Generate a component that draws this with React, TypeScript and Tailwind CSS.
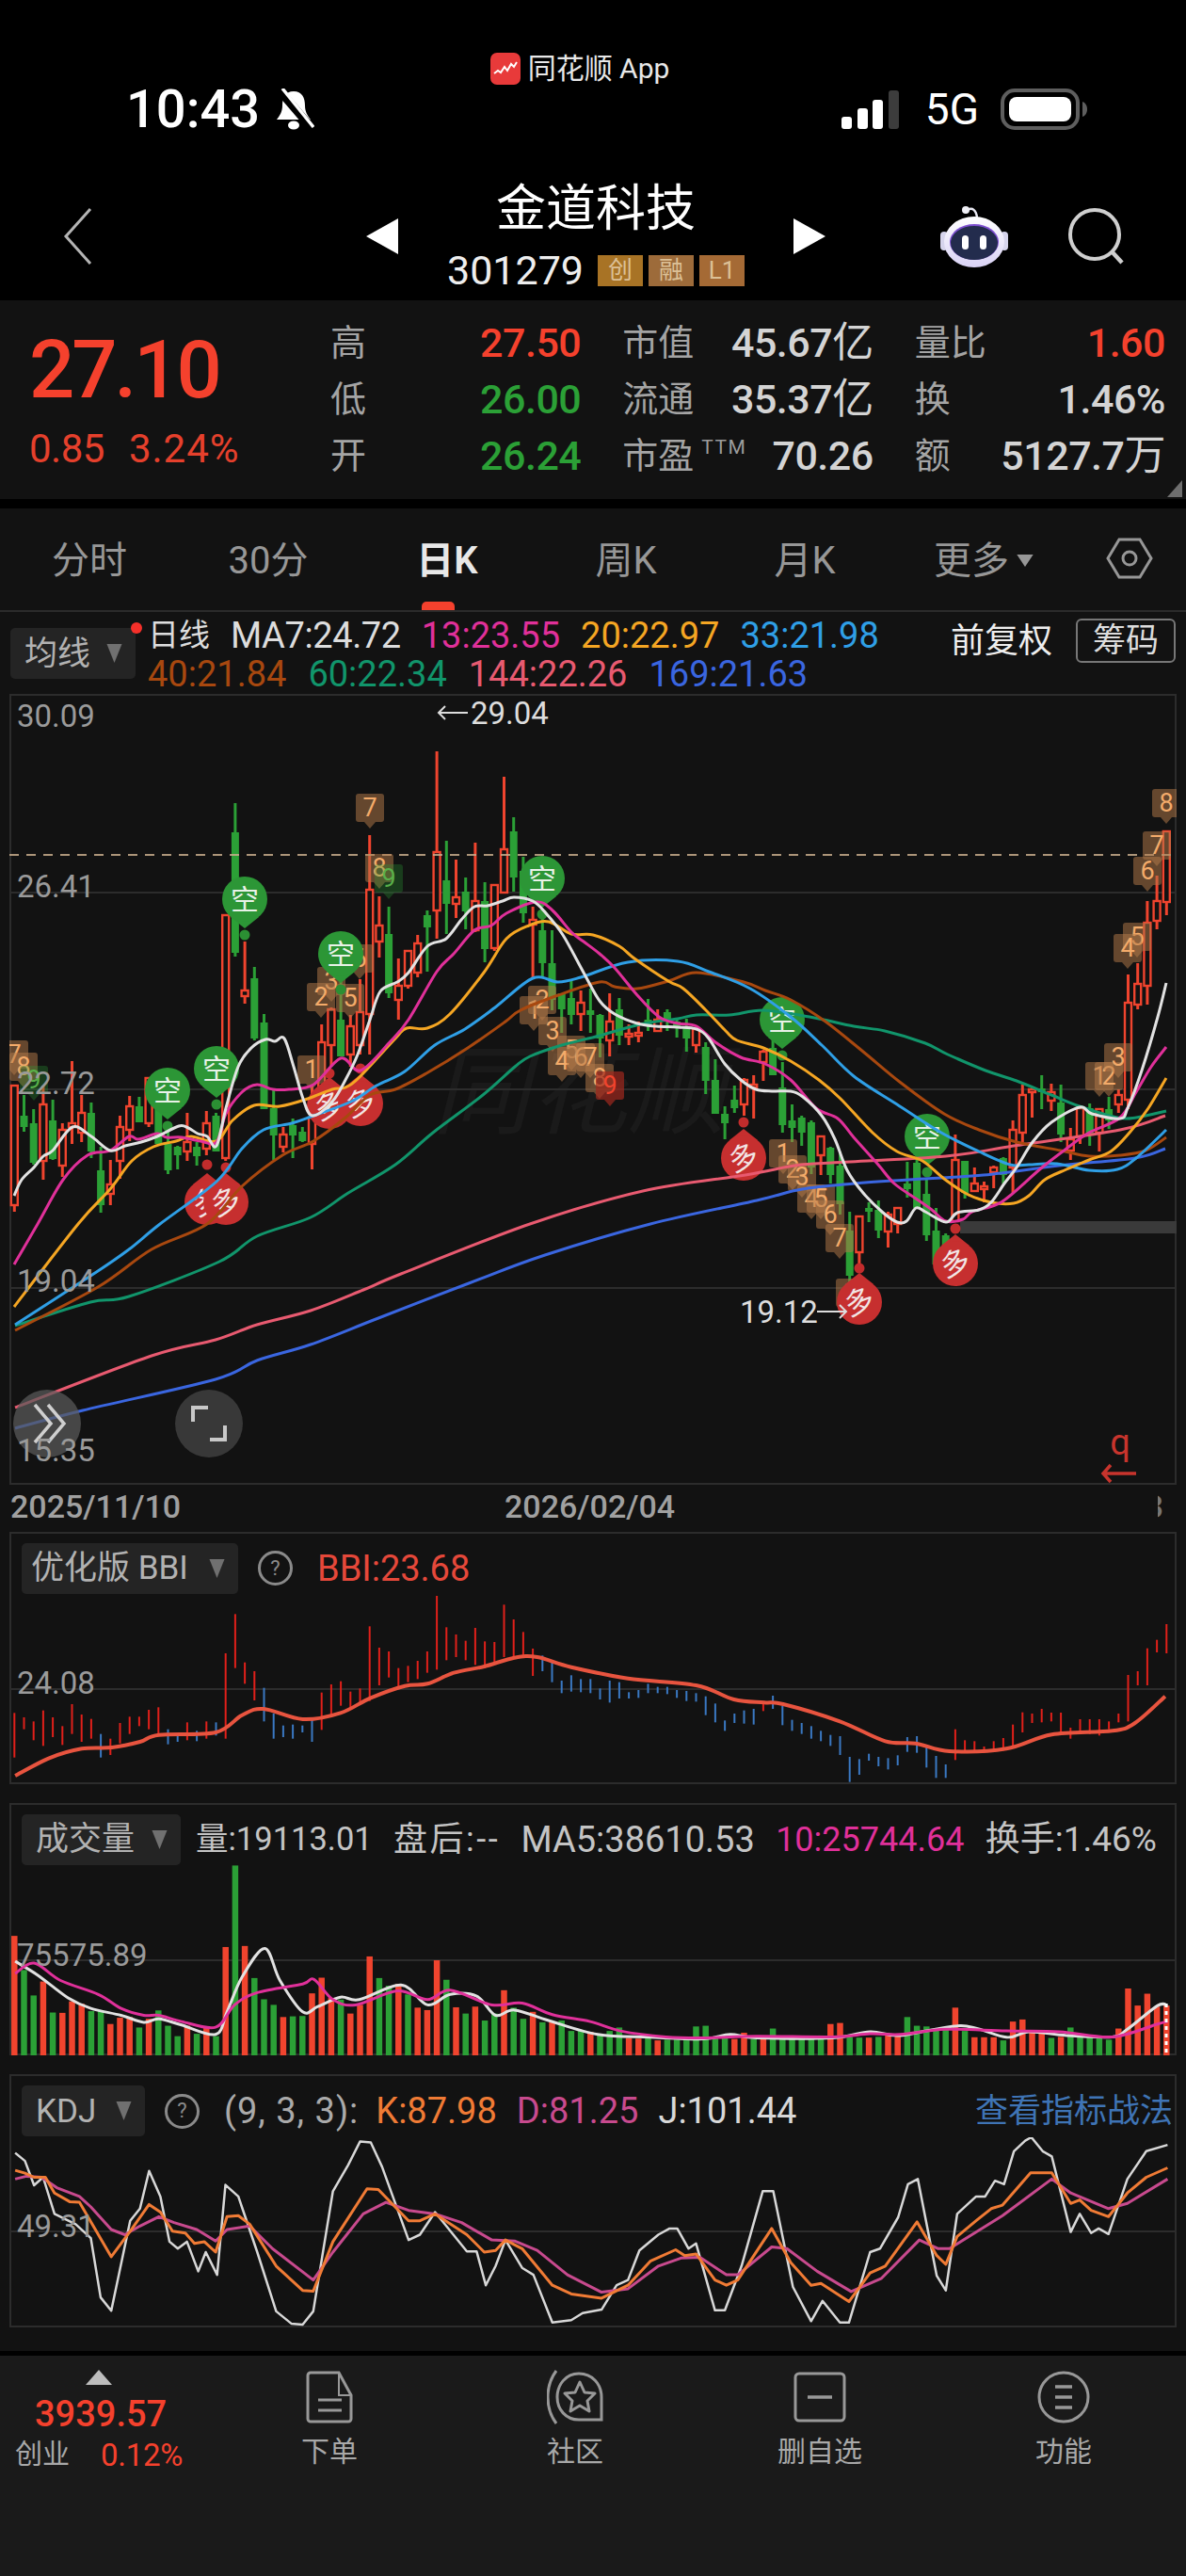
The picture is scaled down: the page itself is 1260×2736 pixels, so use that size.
const RED = '#f0442e';
const GRN = '#2ba036';

// candle: high, body top, body bottom, low, red?
const candles: number[][] = [
  [1153,1153,1280,1287,1],[1163,1185,1197,1202,0],[1178,1193,1235,1237,0],[1153,1173,1233,1253,1],[1168,1190,1231,1232,0],
  [1193,1200,1238,1250,1],[1127,1193,1197,1215,1],[1163,1182,1203,1213,1],[1171,1182,1223,1230,0],[1218,1243,1280,1288,0],
  [1232,1258,1268,1280,1],[1185,1197,1233,1252,1],[1164,1175,1200,1212,1],[1165,1175,1192,1192,0],[1144,1145,1193,1197,1],
  [1137,1150,1215,1215,0],[1193,1215,1243,1247,0],[1217,1218,1227,1242,0],[1182,1213,1223,1233,1],[1213,1218,1228,1238,0],
  [1180,1193,1220,1227,1],[1182,1185,1223,1223,0],[972,972,1230,1233,1],[853,884,1012,1016,0],[1000,1052,1058,1066,1],
  [1027,1039,1103,1105,0],[1077,1086,1178,1178,0],[1158,1177,1206,1232,0],[1197,1205,1218,1224,1],[1188,1195,1206,1230,0],
  [1197,1202,1212,1213,0],[1153,1187,1215,1242,1],[1088,1107,1187,1197,1],[1070,1072,1110,1133,1],[1040,1083,1122,1122,0],
  [1078,1090,1120,1133,1],[1040,1075,1110,1120,1],[887,945,1077,1120,1],[952,983,1000,1017,1],[963,992,1055,1060,0],
  [1018,1047,1062,1083,1],[1010,1010,1047,1050,1],[993,1002,1033,1038,1],[967,972,985,1032,0],[798,905,967,997,1],
  [893,935,960,992,0],[913,953,960,975,1],[932,947,968,987,0],[895,957,988,990,1],[937,957,1008,1022,0],
  [940,940,1007,1010,1],[825,902,948,948,1],[868,883,932,947,0],[910,925,970,980,0],[963,977,982,1038,1],
  [973,988,1023,1038,0],[988,1023,1062,1073,0],[1055,1055,1072,1097,0],[1040,1060,1078,1088,0],[1052,1065,1077,1095,1],
  [1050,1073,1078,1097,0],[1077,1078,1103,1123,0],[1055,1085,1105,1122,1],[1060,1072,1100,1110,0],[1088,1098,1100,1110,1],
  [1085,1097,1098,1107,1],[1061,1083,1090,1095,0],[1072,1083,1095,1095,1],[1072,1075,1083,1095,0],[1083,1085,1090,1102,0],
  [1082,1090,1103,1117,0],[1092,1093,1110,1118,1],[1107,1112,1148,1162,0],[1125,1147,1183,1183,0],[1175,1183,1193,1210,0],
  [1153,1168,1177,1182,0],[1145,1147,1173,1185,1],[1142,1152,1153,1188,1],[1115,1117,1128,1148,1],[1100,1113,1142,1142,0],
  [1128,1155,1195,1203,0],[1173,1190,1198,1213,0],[1185,1187,1203,1217,0],[1190,1192,1240,1247,0],[1207,1207,1227,1248,1],
  [1218,1219,1248,1257,0],[1223,1238,1279,1290,0],[1287,1307,1355,1363,0],[1292,1292,1330,1343,1],[1277,1283,1287,1298,0],
  [1275,1285,1307,1315,0],[1287,1290,1308,1325,1],[1282,1283,1300,1310,1],[1234,1257,1263,1272,0],[1230,1235,1283,1283,0],
  [1253,1268,1312,1318,0],[1283,1307,1343,1350,0],[1310,1312,1328,1350,0],[1205,1232,1297,1297,1],[1233,1233,1267,1273,0],
  [1240,1257,1265,1265,1],[1255,1260,1262,1277,1],[1238,1240,1245,1262,1],[1229,1230,1248,1257,0],[1190,1200,1240,1268,1],
  [1152,1163,1203,1213,1],[1155,1157,1160,1187,1],[1142,1156,1160,1178,0],[1151,1160,1169,1180,1],[1152,1171,1205,1213,0],
  [1198,1210,1222,1232,1],[1175,1177,1207,1215,1],[1172,1177,1205,1217,0],[1177,1178,1203,1223,1],[1165,1178,1190,1199,0],
  [1157,1163,1173,1182,1],[1035,1065,1168,1178,1],[1023,1045,1067,1072,1],[957,980,1047,1067,1],[930,957,978,987,1],
  [882,883,958,972,1],
];

const maLines: { c: string; p: number[] }[] = [
  { c: '#3a66e0', p: [16,1517,88,1498,229,1465,273,1445,330,1428,402,1400,498,1363,579,1333,691,1300,804,1275,852,1263,908,1257,965,1253,1045,1248,1125,1238,1206,1230,1238,1220] },
  { c: '#e85a70', p: [16,1495,161,1440,229,1423,273,1407,330,1392,386,1370,426,1353,563,1300,683,1265,792,1248,844,1238,884,1235,1005,1228,1077,1217,1190,1200,1238,1185] },
  { c: '#11956b', p: [16,1408,96,1383,137,1377,233,1340,273,1313,330,1293,370,1267,420,1237,460,1203,513,1163,547,1133,563,1122,597,1110,637,1100,680,1088,720,1082,740,1078,775,1078,811,1073,860,1080,907,1090,940,1095,983,1108,1007,1120,1047,1137,1080,1148,1117,1163,1147,1175,1187,1187,1207,1187,1239,1180] },
  { c: '#a8480f', p: [16,1413,104,1367,161,1327,220,1300,257,1260,300,1227,333,1212,367,1187,393,1163,420,1157,453,1140,497,1113,537,1085,553,1073,593,1057,637,1043,653,1048,677,1050,710,1042,740,1033,790,1043,813,1052,840,1062,877,1085,917,1117,957,1150,1003,1183,1040,1200,1080,1213,1127,1222,1157,1228,1190,1227,1217,1222,1239,1208] },
  { c: '#2f9fe6', p: [16,1407,104,1350,137,1327,170,1300,230,1255,257,1220,280,1200,310,1193,333,1185,373,1170,400,1153,430,1138,462,1110,494,1093,526,1070,566,1039,593,1043,617,1038,667,1022,720,1021,753,1032,797,1050,840,1080,873,1110,907,1143,953,1173,1000,1203,1040,1223,1073,1237,1093,1237,1123,1236,1157,1243,1187,1242,1207,1230,1239,1200] },
  { c: '#f5a623', p: [15,1388,83,1300,117,1263,140,1233,163,1218,187,1212,203,1207,230,1212,247,1190,270,1174,297,1175,327,1167,353,1157,367,1155,383,1143,420,1103,432,1092,454,1092,478,1077,514,1033,538,997,562,983,583,979,607,992,630,993,658,1005,674,1018,710,1042,726,1050,750,1073,771,1095,783,1105,811,1113,840,1127,870,1147,893,1167,927,1203,953,1223,980,1233,1003,1252,1027,1268,1053,1277,1077,1278,1093,1270,1110,1253,1133,1242,1157,1232,1180,1223,1200,1203,1220,1177,1239,1145] },
  { c: '#e0309a', p: [15,1343,40,1300,67,1253,93,1227,117,1222,137,1207,147,1210,167,1204,177,1208,193,1208,213,1212,230,1213,240,1183,257,1160,273,1152,290,1157,307,1157,333,1152,362,1124,383,1137,414,1107,434,1083,464,1032,482,1013,504,988,522,983,538,970,570,958,587,967,607,990,620,1000,637,1013,653,1028,677,1057,700,1080,720,1087,740,1090,760,1107,787,1123,813,1130,840,1147,867,1177,890,1188,907,1208,933,1237,950,1257,973,1273,990,1285,1005,1297,1023,1295,1033,1287,1057,1280,1073,1270,1107,1240,1133,1220,1157,1203,1190,1187,1207,1160,1223,1133,1239,1112] },
  { c: '#e2e2e2', p: [15,1270,23,1253,36,1240,46,1228,56,1222,77,1197,97,1207,117,1222,133,1217,150,1213,167,1207,190,1196,200,1198,210,1204,220,1207,230,1217,240,1177,253,1133,267,1113,282,1104,292,1106,302,1103,312,1133,322,1167,332,1185,353,1170,367,1147,380,1120,393,1083,404,1053,422,1043,434,1033,454,1005,474,997,490,977,504,963,518,962,534,957,546,953,566,957,580,970,598,993,620,1033,637,1063,653,1077,677,1087,697,1090,720,1091,740,1093,753,1103,770,1130,787,1147,803,1157,820,1159,840,1159,853,1165,873,1185,887,1210,900,1243,917,1267,937,1287,953,1298,963,1297,973,1283,983,1287,1005,1298,1017,1288,1040,1285,1053,1277,1067,1257,1080,1240,1097,1213,1117,1192,1147,1176,1160,1183,1190,1188,1198,1177,1213,1137,1230,1080,1239,1044] },
];

const kongPins = [[260,955],[362,1013],[576,933],[230,1135],[178,1158],[831,1083],[985,1207]];
const duoPins = [[220,1277,1237],[240,1277,1240],[350,1175,1140],[383,1172,1135],[790,1230,1192],[913,1383,1347],[1015,1342,1305]];

const tags: [number, number, string, string?][] = [
  [393,843,'7'],[403,907,'8'],[413,918,'9','g'],[352,1027,'3'],[382,1003,'6'],[341,1044,'2'],[372,1045,'5'],[331,1121,'1'],
  [15,1105,'7'],[25,1118,'8'],[36,1132,'9','g'],
  [567,1058,'1'],[576,1047,'2'],[587,1080,'3'],[607,1100,'5'],[597,1112,'4'],[617,1108,'6'],[627,1108,'7'],[637,1130,'8'],[648,1138,'9','r'],
  [832,1210,'1'],[842,1227,'2'],[852,1235,'3'],[862,1258,'4'],[872,1258,'5'],[882,1275,'6'],[892,1300,'7'],[903,1358,'8'],
  [1168,1128,'1'],[1178,1128,'2'],[1188,1108,'3'],[1208,980,'5'],[1198,992,'4'],[1219,910,'6'],[1229,883,'7'],[1239,838,'8'],
];

// bbi bars, read as top / bottom in a 1.244x / 3x crop
const bbi: number[][] = [
  [598,740],[612,650],[625,685],[590,703],[612,675],[640,700],[570,665],[603,690],[617,680],[665,740],[680,732],[630,695],[610,665],[610,640],[588,650],[580,665],[650,698],[668,690],[628,685],[655,688],[625,680],[628,670],
  [408,680],[283,455],[437,505],[465,558],[518,625],[600,680],[638,675],[635,680],[638,660],[620,690],[533,652],[507,610],[497,575],[530,580],[520,570],[322,560],[390,510],[402,485],[455,518],[448,500],[432,490],[402,470],
  [225,460],[325,430],[348,420],[368,430],[327,445],[370,455],[372,440],[253,420],[300,420],[340,415],[393,480],[415,465],[430,500],[495,535],[478,530],[490,532],[490,535],[520,555],[495,565],[500,552],[532,552],[525,550],
  [505,535],[515,535],[515,538],[525,550],[528,560],[535,562],[545,605],[568,628],[622,655],[600,630],[590,632],[585,635],[565,592],[543,585],[575,637],[620,655],[630,665],[640,680],[655,688],[668,703],[672,732],[738,818],
  [745,795],[728,750],[738,768],[742,778],[733,765],[675,722],[672,725],[705,772],[735,805],[762,805],[650,748],[685,725],[688,720],[705,725],[688,720],[678,718],[635,710],[596,660],[600,630],[585,628],[597,625],[597,665],
  [645,680],[618,660],[618,665],[618,670],[625,650],[600,628],[477,625],[465,510],[392,510],[365,405],[315,408],
];
const bbiBlue = new Set([9,16,17,19,21,26,27,28,29,30,31,55,56,57,58,59,60,61,62,63,64,65,66,67,68,69,70,71,72,73,74,75,76,77,79,80,81,82,83,84,85,86,87,88,89,90,91,92,93,94,95,96,97]);
const bbiLine = [20,798,65,742,108,712,148,708,185,690,210,668,285,660,320,605,348,585,400,618,450,598,490,550,535,512,565,505,600,470,640,450,680,422,710,420,755,452,830,488,920,510,970,555,1010,565,1035,570,1110,625,1170,688,1210,695,1255,720,1330,712,1390,667,1470,655,1500,630,1540,545];

// volume bars: top in crop px, red?
const vol: number[][] = [
  [422,1],[520,0],[593,0],[553,1],[642,0],[643,1],[610,1],[617,1],[638,0],[638,0],[675,1],[657,1],[655,1],[685,0],[660,1],[636,0],[680,0],[710,0],[680,1],[703,0],[685,1],[710,0],
  [454,1],[220,0],[451,1],[543,0],[604,0],[620,0],[655,1],[653,0],[652,0],[587,1],[542,1],[600,1],[605,0],[645,1],[620,1],[481,1],[543,0],[565,0],[560,1],[590,0],[628,1],[635,1],
  [492,1],[548,0],[627,1],[645,0],[625,1],[665,0],[645,0],[578,1],[628,0],[660,0],[640,1],[670,0],[670,1],[665,0],[695,0],[695,0],[698,1],[708,0],[695,0],[685,0],[715,1],[717,1],
  [708,0],[722,1],[720,0],[720,0],[722,0],[682,0],[680,0],[715,0],[715,0],[718,1],[700,1],[718,0],[710,1],[688,0],[710,0],[710,0],[712,0],[718,0],[708,0],[675,1],[672,1],[712,0],
  [714,0],[714,1],[712,0],[705,1],[705,1],[655,0],[680,0],[682,0],[690,0],[690,0],[628,1],[695,0],[713,1],[713,1],[713,1],[722,0],[668,1],[662,1],[700,1],[700,1],[715,0],[712,1],
  [685,0],[712,0],[712,0],[715,0],[720,0],[688,1],[573,1],[622,1],[588,1],[625,1],[622,1],
];
const volWhite = [20,495,50,535,90,600,120,630,160,650,190,670,210,660,240,678,285,705,300,640,320,540,350,458,370,550,400,640,420,625,450,598,475,605,530,563,565,620,595,590,630,595,655,650,680,635,725,665,790,705,860,713,930,718,965,705,1000,715,1100,715,1150,697,1190,708,1270,680,1330,713,1360,697,1410,708,1470,712,1490,690,1530,622,1543,622];
const volPink = [20,530,45,500,80,550,130,590,160,630,190,650,210,650,240,668,285,684,310,620,340,585,400,560,415,547,440,605,470,620,525,580,565,605,595,578,650,620,690,615,730,648,780,668,820,695,880,712,930,715,1000,710,1100,712,1150,703,1190,705,1250,690,1330,695,1400,697,1470,712,1530,675,1543,668];

const kdjJ = [20,1045,33,1068,45,1138,57,1115,72,1220,100,1250,120,1290,133,1460,147,1498,172,1240,185,1205,197,1097,212,1170,224,1300,235,1320,247,1300,262,1385,272,1330,287,1395,298,1137,315,1170,340,1330,365,1500,385,1535,400,1538,414,1500,440,1155,460,1080,476,1012,490,1015,505,1085,540,1295,555,1280,575,1215,617,1328,630,1328,642,1425,655,1370,668,1295,690,1375,705,1395,730,1532,755,1525,770,1505,795,1495,815,1425,830,1410,845,1325,870,1280,885,1262,895,1262,910,1320,920,1305,945,1497,958,1497,980,1370,1008,1155,1022,1155,1048,1430,1072,1528,1087,1470,1110,1532,1122,1532,1150,1330,1163,1320,1187,1230,1200,1135,1213,1120,1238,1398,1250,1440,1265,1220,1290,1170,1302,1170,1315,1125,1327,1135,1340,1040,1355,1010,1363,1000,1378,1040,1390,1055,1415,1272,1427,1220,1442,1275,1452,1262,1465,1278,1490,1120,1515,1040,1543,1022];
const kdjK = [20,1095,33,1103,45,1115,60,1115,72,1160,92,1185,105,1187,147,1343,172,1270,197,1193,212,1215,228,1270,245,1275,257,1305,270,1300,285,1330,300,1228,315,1225,330,1250,365,1370,400,1440,414,1442,440,1300,485,1148,500,1150,540,1240,555,1240,575,1220,617,1280,640,1330,655,1325,668,1295,690,1320,730,1425,755,1450,795,1462,830,1425,860,1355,893,1323,905,1340,920,1335,945,1410,960,1425,975,1410,1020,1262,1045,1360,1072,1425,1085,1420,1122,1472,1150,1390,1170,1370,1212,1243,1238,1340,1250,1365,1265,1285,1290,1240,1310,1205,1325,1195,1362,1102,1390,1102,1415,1190,1427,1180,1442,1210,1465,1228,1490,1160,1515,1115,1543,1088];
const kdjD = [20,1120,35,1112,55,1115,75,1145,105,1170,120,1200,147,1265,165,1280,185,1255,210,1228,230,1245,260,1265,285,1298,300,1265,330,1255,360,1320,414,1410,440,1330,480,1220,510,1187,540,1210,575,1220,610,1245,650,1295,680,1298,710,1325,750,1395,795,1445,830,1435,870,1370,900,1347,925,1345,960,1395,975,1395,1020,1315,1040,1320,1080,1385,1125,1443,1165,1405,1215,1295,1240,1320,1255,1320,1325,1225,1390,1120,1415,1160,1465,1205,1490,1190,1543,1120];

const xAt = (i: number) => 15.3 + 10.2 * i;

const toPoints = (p: number[], sx = 1, sy = 1, oy = 0) => {
  const out: string[] = [];
  for (let i = 0; i < p.length; i += 2) out.push(`${(p[i] / sx).toFixed(1)},${(oy + p[i + 1] / sy).toFixed(1)}`);
  return out.join(' ');
};

// catmull-rom through the read-off points, the averages are smooth in the picture
const toCurve = (p: number[], sx = 1, sy = 1, oy = 0) => {
  const xs: number[] = [];
  const ys: number[] = [];
  for (let i = 0; i < p.length; i += 2) {
    xs.push(p[i] / sx);
    ys.push(oy + p[i + 1] / sy);
  }
  let d = `M${xs[0].toFixed(1)} ${ys[0].toFixed(1)}`;
  for (let i = 0; i < xs.length - 1; i++) {
    const a = Math.max(i - 1, 0);
    const b = Math.min(i + 2, xs.length - 1);
    const c1x = xs[i] + (xs[i + 1] - xs[a]) / 6;
    const c1y = ys[i] + (ys[i + 1] - ys[a]) / 6;
    const c2x = xs[i + 1] - (xs[b] - xs[i]) / 6;
    const c2y = ys[i + 1] - (ys[b] - ys[i]) / 6;
    d += `C${c1x.toFixed(1)} ${c1y.toFixed(1)} ${c2x.toFixed(1)} ${c2y.toFixed(1)} ${xs[i + 1].toFixed(1)} ${ys[i + 1].toFixed(1)}`;
  }
  return d;
};

const Caret = ({ className = '' }: { className?: string }) => (
  <svg viewBox="0 0 16 20" className={`w-[17px] h-[20px] ${className}`}>
    <path d="M0 0H16L8 20Z" fill="#707070" />
  </svg>
);

const HelpDot = () => (
  <span className="flex items-center justify-center w-[37px] h-[37px] rounded-full border-[3px] border-[#8a8a8a] text-[22px] text-[#8a8a8a] leading-none">?</span>
);

const Dropdown = ({ label, w, pad = 'pl-[15px]' }: { label: string; w: string; pad?: string }) => (
  <div className={`flex items-center justify-between h-[54px] rounded-[5px] bg-[#242424] pr-[14px] ${pad} ${w}`}>
    <span className="text-[35px] leading-none text-[#b2b2b2] whitespace-nowrap">{label}</span>
    <Caret />
  </div>
);

const QuoteCell = ({ label, value, color = 'text-[#d4d4d4]', unit, ttm }: { label: string; value: string; color?: string; unit?: string; ttm?: boolean }) => (
  <div className="flex items-center justify-between h-[60px]">
    <span className="flex items-start text-[38px] leading-none text-[#a4a4a4]">
      {label}
      {ttm && <span className="ml-[8px] text-[21px] text-[#9c9c9c] tracking-[1.5px]">TTM</span>}
    </span>
    <span className={`text-[43px] leading-none font-medium tracking-[-0.5px] ${color}`}>
      {value}
      {unit && <span className="text-[44px] font-normal">{unit}</span>}
    </span>
  </div>
);

const StatusBar = () => (
  <div className="flex items-center justify-between h-[52px] pl-[134px] pr-[105px]">
    <div className="flex items-center gap-[14px]">
      <span className="text-[56px] leading-none font-medium text-white">10:43</span>
      <svg viewBox="0 0 44 44" className="w-[44px] h-[44px]">
        <path d="M22 3C13 3 10 10 10 18c0 7-3 11-6 15h36c-3-4-6-8-6-15 0-8-3-15-12-15z" fill="#fff" />
        <ellipse cx="22" cy="39" rx="6" ry="4.5" fill="#fff" />
        <path d="M6 1l36 42" stroke="#000" strokeWidth="9" />
        <path d="M10 0l33 41" stroke="#fff" strokeWidth="3.5" />
      </svg>
    </div>
    <div className="flex items-center">
      <div className="flex items-end gap-[5.5px] h-[41px]">
        <span className="w-[11px] h-[13px] rounded-[3px] bg-white" />
        <span className="w-[11px] h-[22px] rounded-[3px] bg-white" />
        <span className="w-[11px] h-[31px] rounded-[3px] bg-white" />
        <span className="w-[11px] h-[41px] rounded-[3px] bg-[#3c3c3c]" />
      </div>
      <span className="ml-[28px] text-[46px] leading-none text-white">5G</span>
      <svg viewBox="0 0 92 44" className="ml-[23px] w-[92px] h-[44px]">
        <rect x="2" y="2" width="80" height="40" rx="13" fill="none" stroke="#5e5e5e" strokeWidth="4" />
        <rect x="9" y="9" width="66" height="26" rx="8" fill="#fff" />
        <path d="M87 14c3 1 5 4 5 8s-2 7-5 8z" fill="#5e5e5e" />
      </svg>
    </div>
  </div>
);

const Robot = () => (
  <svg viewBox="0 0 72 66" className="w-[72px] h-[66px]">
    <defs>
      <linearGradient id="shell" x1="0" y1="0" x2="0" y2="1">
        <stop offset="0" stopColor="#ffffff" />
        <stop offset="1" stopColor="#d9d2f5" />
      </linearGradient>
    </defs>
    <path d="M29 5c5-3 9 0 10 8" fill="none" stroke="#e8e8f2" strokeWidth="2.5" />
    <circle cx="27" cy="5" r="4" fill="#f0f0f6" />
    <rect x="0" y="28" width="8" height="20" rx="4" fill="#d6d4ec" />
    <rect x="64" y="28" width="8" height="20" rx="4" fill="#d6d4ec" />
    <ellipse cx="36" cy="39" rx="32" ry="27" fill="url(#shell)" />
    <ellipse cx="36" cy="39" rx="26" ry="19" fill="#7d4fd0" />
    <ellipse cx="36" cy="40" rx="25" ry="18" fill="#232c4d" />
    <rect x="23" y="32" width="7" height="15" rx="3.5" fill="#fff" />
    <rect x="42" y="32" width="7" height="15" rx="3.5" fill="#fff" />
  </svg>
);

const NavHeader = () => (
  <div className="flex items-center pt-[49px]">
    <svg viewBox="0 0 31 60" className="ml-[67px] w-[31px] h-[60px] mt-[4px]">
      <path d="M29 1L3 30l26 29" fill="none" stroke="#b4b4b4" strokeWidth="3" />
    </svg>
    <svg viewBox="0 0 34 38" className="ml-[291px] w-[34px] h-[38px] mt-[4px]">
      <path d="M34 0V38L0 19Z" fill="#fff" />
    </svg>
    <div className="flex flex-col items-center w-[420px]">
      <div className="h-[60px] flex items-center text-[53px] leading-none text-white pt-[2px]">金道科技</div>
      <div className="flex items-center h-[40px] mt-[16px] gap-[2px]">
        <span className="text-[43px] leading-none text-[#eeeeee] w-[158px]">301279</span>
        <span className="flex items-center justify-center w-[48px] h-[33px] bg-[#a87325] text-[26px] text-[#dcc096] leading-none">创</span>
        <span className="flex items-center justify-center w-[48px] h-[33px] ml-[4px] bg-[#9d6b3a] text-[26px] text-[#dcc096] leading-none">融</span>
        <span className="flex items-center justify-center w-[48px] h-[33px] ml-[4px] bg-[#a56a35] text-[26px] text-[#dcc096] leading-none">L1</span>
      </div>
    </div>
    <svg viewBox="0 0 34 38" className="w-[34px] h-[38px] mt-[4px]">
      <path d="M0 0V38L34 19Z" fill="#fff" />
    </svg>
    <div className="ml-[122px] mt-[4px]"><Robot /></div>
    <svg viewBox="0 0 60 60" className="ml-[64px] w-[60px] h-[60px] mt-[4px]">
      <circle cx="28" cy="28" r="26" fill="none" stroke="#cfcfcf" strokeWidth="4" />
      <path d="M46 46l11 12" stroke="#cfcfcf" strokeWidth="4.5" />
    </svg>
  </div>
);

const QuotePanel = () => (
  <section className="relative flex h-[211px] bg-[#121212]">
    <div className="w-[351px] pl-[31px] pt-[32px]">
      <div className="text-[85px] h-[84px] flex items-center leading-none font-medium tracking-[-3px] text-[#f5412d]">27.10</div>
      <div className="flex mt-[21px] text-[42px] leading-none text-[#e5402c] gap-[26px]">
        <span className="tracking-[-0.5px]">0.85</span>
        <span className="tracking-[1px]">3.24%</span>
      </div>
    </div>
    <div className="grid grid-cols-3 gap-x-[44px] w-[887px] h-[180px] mt-[15px]">
      <QuoteCell label="高" value="27.50" color="text-[#f5412d]" />
      <QuoteCell label="市值" value="45.67" unit="亿" />
      <QuoteCell label="量比" value="1.60" color="text-[#f5412d]" />
      <QuoteCell label="低" value="26.00" color="text-[#2ba036]" />
      <QuoteCell label="流通" value="35.37" unit="亿" />
      <QuoteCell label="换" value="1.46%" />
      <QuoteCell label="开" value="26.24" color="text-[#2ba036]" />
      <QuoteCell label="市盈" value="70.26" ttm />
      <QuoteCell label="额" value="5127.7" unit="万" />
    </div>
    <svg viewBox="0 0 16 18" className="absolute right-[4px] bottom-[2px] w-[16px] h-[18px]">
      <path d="M16 0V18H0Z" fill="#6e6e6e" />
    </svg>
  </section>
);

const tabs = ['分时', '30分', '日K', '周K', '月K'];

const Tabs = () => (
  <nav className="flex h-[110px] bg-[#121212] border-b-2 border-[#2b2b2b]">
    {tabs.map((t) => (
      <div key={t} className={`relative flex items-center justify-center w-[190px] pt-[3px] text-[40px] leading-none ${t === '日K' ? 'font-semibold text-[#e8e8e8]' : 'text-[#979797]'}`}>
        {t}
        {t === '日K' && <span className="absolute bottom-0 left-[68px] w-[35px] h-[9px] rounded-t-[5px] bg-[#f5412d]" />}
      </div>
    ))}
    <div className="flex items-center justify-center gap-[8px] w-[190px] pt-[3px] text-[40px] leading-none text-[#979797]">
      更多
      <svg viewBox="0 0 16 12" className="w-[18px] h-[13px]"><path d="M0 0H16L8 12Z" fill="#979797" /></svg>
    </div>
    <div className="flex items-center justify-center w-[120px] pb-[3px]">
      <svg viewBox="0 0 50 44" className="w-[50px] h-[44px]">
        <path d="M2 22L14 2h22l12 20-12 20H14Z" fill="none" stroke="#979797" strokeWidth="3" />
        <circle cx="25" cy="22" r="7" fill="none" stroke="#979797" strokeWidth="3" />
      </svg>
    </div>
  </nav>
);

const MaLegend = () => (
  <div className="relative flex h-[87px] bg-[#121212] pl-[11px] pt-[17px]">
    <Dropdown label="均线" w="w-[133px]" />
    <span className="absolute left-[139px] top-[11px] w-[12px] h-[12px] rounded-full bg-[#f5302a]" />
    <div className="flex flex-col ml-[13px] -mt-[17px] text-[38px] leading-none">
      <div className="flex items-center h-[47px] gap-[22px] pt-[2px]">
        <span className="text-[33px] text-[#dddddd]">日线</span>
        <span className="text-[#dddddd] tracking-[-0.4px]">MA7:24.72</span>
        <span className="text-[#e0309a]">13:23.55</span>
        <span className="text-[#f5a623]">20:22.97</span>
        <span className="text-[#2f9fe6]">33:21.98</span>
      </div>
      <div className="flex items-center h-[38px] gap-[23px]">
        <span className="text-[#a8480f]">40:21.84</span>
        <span className="text-[#11956b]">60:22.34</span>
        <span className="text-[#e85a70]">144:22.26</span>
        <span className="text-[#3a66e0]">169:21.63</span>
      </div>
    </div>
    <div className="flex items-center gap-[25px] absolute left-[1010px] top-[7px]">
      <span className="text-[36px] leading-none text-[#eeeeee]">前复权</span>
      <span className="flex items-center justify-center w-[106px] h-[47px] rounded-[6px] border-2 border-[#777777] text-[35px] leading-none text-[#dddddd]">筹码</span>
    </div>
  </div>
);

const AxisLabel = ({ x = 18, y, children }: { x?: number; y: number; children: string }) => (
  <text x={x} y={y} fontSize="33" fill="#9a9a9a" dominantBaseline="central">{children}</text>
);

const Candle = ({ d, i }: { d: number[]; i: number }) => {
  const [h, t, b, l, up] = d;
  const x = xAt(i);
  const c = up ? RED : GRN;
  return (
    <g>
      <rect x={x - 1.5} y={h} width={3} height={l - h} fill={c} />
      {up ? (
        <rect x={x - 3.5} y={t} width={7} height={Math.max(b - t, 3)} fill="#121212" stroke={c} strokeWidth={2.4} />
      ) : (
        <rect x={x - 4} y={t} width={8} height={Math.max(b - t, 3)} fill={c} />
      )}
    </g>
  );
};

const Tag = ({ cx, top, label, tone }: { cx: number; top: number; label: string; tone?: string }) => {
  const bg = tone === 'g' ? 'rgba(43,160,54,0.3)' : tone === 'r' ? 'rgba(160,40,30,0.7)' : 'rgba(178,120,72,0.52)';
  const fg = tone === 'g' ? '#58b04a' : tone === 'r' ? '#f0442e' : '#f4ab6a';
  return (
    <g>
      <path d={`M${cx - 15} ${top + 3}a3 3 0 0 1 3-3h24a3 3 0 0 1 3 3v24a3 3 0 0 1-3 3h-6l-6 7-6-7h-6a3 3 0 0 1-3-3z`} fill={bg} />
      <text x={cx} y={top + 15} fontSize="27" fill={fg} textAnchor="middle" dominantBaseline="central">{label}</text>
    </g>
  );
};

const KongPin = ({ x, y }: { x: number; y: number }) => (
  <g>
    <circle cx={x} cy={y + 38} r="5.5" fill="#2b8f33" />
    <path d={`M${x - 15} ${y + 19}L${x} ${y + 31}L${x + 15} ${y + 19}Z`} fill="#2c9636" />
    <circle cx={x} cy={y} r="24" fill="#2c9636" />
    <text x={x} y={y} fontSize="30" fill="#e8f2e8" textAnchor="middle" dominantBaseline="central">空</text>
  </g>
);

const DuoPin = ({ x, y, dot }: { x: number; y: number; dot: number }) => (
  <g>
    <circle cx={x} cy={dot} r="5.5" fill="#c22c2c" />
    <path d={`M${x - 15} ${y - 19}L${x} ${y - 31}L${x + 15} ${y - 19}Z`} fill="#c62f2f" />
    <circle cx={x} cy={y} r="24" fill="#c62f2f" />
    <text x={x} y={y} fontSize="31" fill="#f2e4e4" textAnchor="middle" dominantBaseline="central" transform={`rotate(-20 ${x} ${y})`}>多</text>
  </g>
);

const MainChart = () => (
  <div className="relative w-[1240px] h-[840px] mx-[10px] ring-2 ring-inset ring-[#2c2c2c]">
    <svg viewBox="10 737 1240 840" className="block w-[1240px] h-[840px]">
      <text x="615" y="1160" fontSize="104" fill="#1a1a1a" textAnchor="middle" dominantBaseline="central" fontStyle="italic">同花顺</text>
      {[948, 1157, 1368].map((y) => (
        <line key={y} x1="10" x2="1250" y1={y} y2={y} stroke="#2c2c2c" strokeWidth="2" />
      ))}
      {candles.map((d, i) => <Candle key={i} d={d} i={i} />)}
      <line x1="10" x2="1250" y1="908" y2="908" stroke="#c8ad8c" strokeWidth="2" strokeDasharray="10 8" opacity="0.85" />
      <rect x="1020" y="1297" width="230" height="13" fill="#3a3a3a" />
      {tags.map(([cx, top, label, tone], i) => <Tag key={i} cx={cx} top={top} label={label} tone={tone} />)}
      {kongPins.map(([x, y]) => <KongPin key={`${x}`} x={x} y={y} />)}
      {duoPins.map(([x, y, dot]) => <DuoPin key={`${x}`} x={x} y={y} dot={dot} />)}
      {maLines.map((m) => (
        <path key={m.c} d={toCurve(m.p)} fill="none" stroke={m.c} strokeWidth="3" strokeLinejoin="round" />
      ))}
      <AxisLabel y={760}>30.09</AxisLabel>
      <AxisLabel y={941}>26.41</AxisLabel>
      <AxisLabel y={1150}>22.72</AxisLabel>
      <AxisLabel y={1360}>19.04</AxisLabel>
      <text x="500" y="757" fontSize="33" fill="#dddddd" dominantBaseline="central">29.04</text>
      <path d="M466 757H497M473 750l-7 7 7 7" fill="none" stroke="#dddddd" strokeWidth="2" />
      <text x="786" y="1393" fontSize="33" fill="#dddddd" dominantBaseline="central">19.12</text>
      <path d="M868 1393H899M892 1386l7 7-7 7" fill="none" stroke="#dddddd" strokeWidth="2" />
      <circle cx="50" cy="1512" r="36" fill="#5a5a5a" opacity="0.72" />
      <path d="M37 1492l17 20-17 20M51 1492l17 20-17 20" fill="none" stroke="#cfcfcf" strokeWidth="3.5" />
      <circle cx="222" cy="1512" r="36" fill="#383838" />
      <path d="M205 1510v-15h16M239 1514v15h-16" fill="none" stroke="#c8c8c8" strokeWidth="4" />
      <AxisLabel y={1540}>15.35</AxisLabel>
      <text x="1190" y="1532" fontSize="38" fill="#c8342d" textAnchor="middle" dominantBaseline="central">q</text>
      <path d="M1172 1565H1207M1180 1556l-8 9 8 9" fill="none" stroke="#c8342d" strokeWidth="3.5" />
    </svg>
  </div>
);

const DateRow = () => (
  <div className="flex items-center h-[50px] pl-[11px] pb-[4px] text-[34px] font-medium leading-none text-[#a0a0a0]">
    <span className="w-[525px]">2025/11/10</span>
    <span>2026/02/04</span>
    <span className="ml-auto mr-[24px] w-[6px] overflow-hidden text-[#777777] flex justify-end">3</span>
  </div>
);

const BbiPanel = () => (
  <div className="mx-[10px] h-[268px] ring-2 ring-inset ring-[#2c2c2c] flex flex-col">
    <div className="flex items-center h-[68px] pl-[13px] pt-[9px]">
      <Dropdown label="优化版 BBI" w="w-[230px]" pad="pl-[10px]" />
      <span className="ml-[21px]"><HelpDot /></span>
      <span className="ml-[26px] text-[38px] leading-none text-[#e5483a]">BBI:23.68</span>
    </div>
    <svg viewBox="10 1695 1240 200" className="block w-[1240px] h-[200px]">
      <line x1="10" x2="1250" y1="1794" y2="1794" stroke="#2c2c2c" strokeWidth="2" />
      {bbi.map(([t, b], i) => (
        <rect key={i} x={xAt(i) - 1} y={1620 + t / 3} width={2} height={(b - t) / 3} fill={bbiBlue.has(i) ? '#3a78c2' : '#e0201a'} />
      ))}
      <path d={toCurve(bbiLine, 1.244, 3, 1620)} fill="none" stroke="#e8543f" strokeWidth="4" />
      <AxisLabel y={1787}>24.08</AxisLabel>
    </svg>
  </div>
);

const VolumePanel = () => (
  <div className="mx-[10px] mt-[20px] h-[268px] ring-2 ring-inset ring-[#2c2c2c] flex flex-col">
    <div className="flex items-center h-[66px] pl-[13px] pt-[11px]">
      <Dropdown label="成交量" w="w-[169px]" />
      <div className="flex items-center justify-between ml-[16px] w-[1021px] leading-none text-[#c4c4c4]">
        <span className="text-[34.5px]">量:19113.01</span>
        <span className="text-[36px] tracking-[2.5px]">盘后:--</span>
        <span className="text-[38px]">MA5:38610.53</span>
        <span className="text-[36px] text-[#e0309a]">10:25744.64</span>
        <span className="text-[37px]">换手:1.46%</span>
      </div>
    </div>
    <svg viewBox="10 1981 1240 202" className="block w-[1240px] h-[202px]">
      <line x1="10" x2="1250" y1="2082" y2="2082" stroke="#2c2c2c" strokeWidth="2" />
      {vol.map(([t, up], i) => {
        const y = 1900 + t / 2.703;
        return <rect key={i} x={xAt(i) - 3.25} y={y} width={6.5} height={2183 - y} fill={up ? RED : GRN} />;
      })}
      <path d={toCurve(volWhite, 1.244, 2.703, 1900)} fill="none" stroke="#e2e2e2" strokeWidth="3" />
      <path d={toCurve(volPink, 1.244, 2.703, 1900)} fill="none" stroke="#e0309a" strokeWidth="3" />
      <line x1="1239" x2="1239" y1="2128" y2="2183" stroke="#ffffff" strokeWidth="3" strokeDasharray="4 4" />
      <AxisLabel y={2076}>75575.89</AxisLabel>
    </svg>
  </div>
);

const KdjPanel = () => (
  <div className="mx-[10px] mt-[20px] h-[269px] ring-2 ring-inset ring-[#2c2c2c] flex flex-col">
    <div className="flex items-center h-[67px] pl-[13px] pt-[11px] text-[38px] leading-none">
      <Dropdown label="KDJ" w="w-[131px]" />
      <span className="ml-[21px]"><HelpDot /></span>
      <span className="ml-[26px] text-[#aaaaaa] tracking-[1px]">(9, 3, 3):</span>
      <span className="ml-[18px] text-[#f07b35]">K:87.98</span>
      <span className="ml-[21px] text-[#c84a8e]">D:81.25</span>
      <span className="ml-[21px] text-[#d8d8d8]">J:101.44</span>
      <span className="ml-auto mr-[4px] text-[35px] text-[#3f74b5]">查看指标战法</span>
    </div>
    <svg viewBox="10 2270 1240 202" className="block w-[1240px] h-[202px]">
      <line x1="10" x2="1250" y1="2370" y2="2370" stroke="#2c2c2c" strokeWidth="2" />
      <polyline points={toPoints(kdjJ, 1.244, 2.703, 1900)} fill="none" stroke="#d8d8d8" strokeWidth="2.5" strokeLinejoin="round" />
      <polyline points={toPoints(kdjD, 1.244, 2.703, 1900)} fill="none" stroke="#c84a8e" strokeWidth="3" strokeLinejoin="round" />
      <polyline points={toPoints(kdjK, 1.244, 2.703, 1900)} fill="none" stroke="#f07b35" strokeWidth="3" strokeLinejoin="round" />
      <AxisLabel y={2364}>49.31</AxisLabel>
    </svg>
  </div>
);

const navItems = [
  {
    label: '下单',
    w: 'w-[260px]',
    icon: (
      <svg viewBox="0 0 52 56" className="w-[52px] h-[56px]">
        <path d="M3 5a3 3 0 0 1 3-3h30l13 24v25a3 3 0 0 1-3 3H6a3 3 0 0 1-3-3z" fill="none" stroke="#989898" strokeWidth="3" />
        <path d="M36 3v23h12" fill="none" stroke="#989898" strokeWidth="2" />
        <path d="M14 31h25M14 42h25" stroke="#989898" strokeWidth="3" />
      </svg>
    ),
  },
  {
    label: '社区',
    w: 'w-[262px]',
    icon: (
      <svg viewBox="0 0 60 58" className="w-[60px] h-[58px]">
        <path d="M10 1C-2 17-2 41 10 57" fill="none" stroke="#989898" strokeWidth="3" />
        <path d="M58 53H34C20 53 11 42 11 29S20 4 34 4s24 11 24 25z" fill="none" stroke="#989898" strokeWidth="3" />
        <path d="M35 13l5 11 11 1-8 8 2 11-10-6-10 6 2-11-8-8 11-1z" fill="none" stroke="#989898" strokeWidth="3" strokeLinejoin="round" />
      </svg>
    ),
  },
  {
    label: '删自选',
    w: 'w-[258px]',
    icon: (
      <svg viewBox="0 0 56 56" className="w-[56px] h-[56px]">
        <rect x="2" y="3" width="52" height="50" rx="4" fill="none" stroke="#989898" strokeWidth="3" />
        <path d="M15 28h26" stroke="#989898" strokeWidth="3.5" />
      </svg>
    ),
  },
  {
    label: '功能',
    w: 'w-[260px]',
    icon: (
      <svg viewBox="0 0 56 56" className="w-[56px] h-[56px]">
        <circle cx="28" cy="28" r="26" fill="none" stroke="#989898" strokeWidth="3" />
        <path d="M19 17h18M19 28h18M19 39h18" stroke="#989898" strokeWidth="3.5" />
      </svg>
    ),
  },
];

const BottomNav = () => (
  <footer className="flex h-[234px] bg-[#1a1a1a]">
    <div className="flex flex-col w-[220px] pt-[15px] pl-[16px]">
      <svg viewBox="0 0 28 16" className="ml-[75px] w-[28px] h-[16px]"><path d="M14 0L28 16H0Z" fill="#bdbdbd" /></svg>
      <span className="ml-[21px] mt-[9px] h-[44px] flex items-center text-[38px] leading-none font-medium text-[#f5412d]">3939.57</span>
      <div className="flex items-center mt-[5px]">
        <span className="w-[91px] text-[29px] leading-none text-[#a8a8a8]">创业</span>
        <span className="text-[33px] leading-none text-[#f5412d] tracking-[-0.3px]">0.12%</span>
      </div>
    </div>
    {navItems.map((n) => (
      <div key={n.label} className={`flex flex-col items-center pt-[15px] ${n.w}`}>
        <div className="h-[58px] flex items-center">{n.icon}</div>
        <span className="mt-[14px] text-[30px] leading-none text-[#a8a8a8]">{n.label}</span>
      </div>
    ))}
  </footer>
);

export default function App() {
  return (
    <div className="w-[1260px] h-[2736px] overflow-hidden bg-black [font-family:Roboto,'Noto_Sans_CJK_SC',sans-serif]">
      <header className="h-[319px] bg-black">
        <div className="flex items-end justify-center gap-[8px] h-[90px] pr-[28px]">
          <svg viewBox="0 0 32 34" className="w-[32px] h-[34px]">
            <rect width="32" height="34" rx="7" fill="#e83a3a" />
            <path d="M4 22l4-3 3 2 4-6 3 4 4-7 3 3 3-5" fill="none" stroke="#fff" strokeWidth="2" />
          </svg>
          <span className="text-[30px] h-[34px] flex items-center leading-none text-[#e8e8e8]">同花顺 App</span>
        </div>
        <StatusBar />
        <NavHeader />
      </header>
      <QuotePanel />
      <div className="h-[10px] bg-black" />
      <Tabs />
      <MaLegend />
      <div className="bg-[#121212] h-[1760px] flex flex-col">
        <MainChart />
        <DateRow />
        <BbiPanel />
        <VolumePanel />
        <KdjPanel />
      </div>
      <div className="h-[5px] bg-black" />
      <BottomNav />
    </div>
  );
}
